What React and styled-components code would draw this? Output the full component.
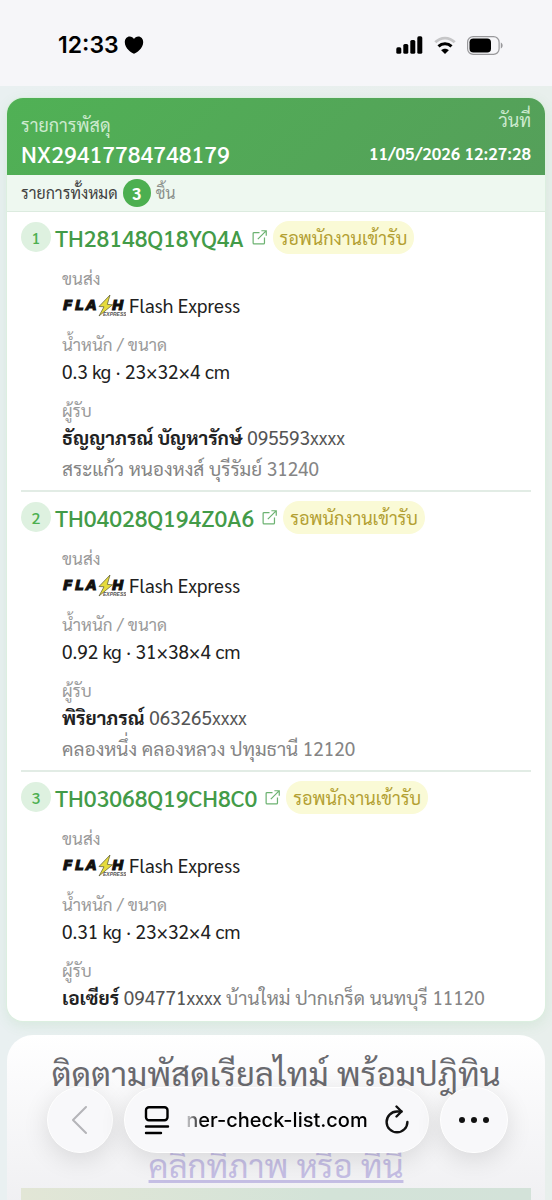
import React from 'react';
import styled, { createGlobalStyle, css } from 'styled-components';

const GlobalStyle = createGlobalStyle`
    * {
        box-sizing: border-box;
    }
    body {
        margin: 0;
        background-color: #e9efee;
        font-family: Sarabun, 'Noto Sans', 'Noto Sans Thai', sans-serif;
        color: #212121;
    }
`;

//#region styled-components
const Screen = styled.div`
    position: relative;
    display: flex;
    flex-direction: column;
    height: 100vh;
    overflow: hidden;
    background: linear-gradient(90deg, #e9f0f1, #e8efec);
`;

const StatusBar = styled.header`
    display: flex;
    flex-shrink: 0;
    justify-content: space-between;
    align-items: center;
    height: 86px;
    padding: 4px 48px 0 58px;
    background-color: #f6f6f9;
    color: #000;
`;

const Clock = styled.div`
    display: flex;
    align-items: center;
    gap: 5px;
    font-family: Inter, sans-serif;
    font-size: 23px;
    font-weight: 600;
`;

const StatusIcons = styled.div`
    display: flex;
    align-items: center;
    gap: 11px;
`;

const Page = styled.main`
    display: flex;
    flex: 1;
    flex-direction: column;
    gap: 14px;
    padding: 12px 7px 0;
`;

const OrderCard = styled.section`
    flex-shrink: 0;
    border-radius: 16px;
    background-color: #fff;
    box-shadow: 0 0 0 1px #dcefe0, 0 4px 14px rgba(76, 175, 80, 0.12);
    overflow: hidden;
`;

const OrderHeader = styled.div`
    display: flex;
    justify-content: space-between;
    height: 77px;
    padding: 8px 14px 0;
    background: linear-gradient(135deg, #50b155, #559f5a);
    color: #fff;
`;

const HeaderColumn = styled.div`
    display: flex;
    flex-direction: column;
    padding-top: ${(props) => (props.$end ? '0' : '5px')};
    gap: ${(props) => (props.$end ? '5px' : '0')};
    align-items: ${(props) => (props.$end ? 'flex-end' : 'flex-start')};
`;

const HeaderLabel = styled.div`
    font-size: 18px;
    line-height: 28px;
    color: #cdeacf;
`;

const OrderNumber = styled.div`
    font-size: 23px;
    font-weight: 500;
    line-height: 28px;
`;

const OrderDate = styled.div`
    font-size: 17px;
    font-weight: 600;
    line-height: 28px;
`;

const TotalRow = styled.div`
    display: flex;
    align-items: center;
    gap: 5px;
    height: 37px;
    padding: 0 14px 1px;
    border-bottom: 1px solid #dcebdf;
    background-color: #eef8f0;
    font-size: 16px;
    color: #424242;
`;

const Muted = styled.span`
    color: #8a8f8b;
`;

const round = css`
    display: flex;
    flex-shrink: 0;
    justify-content: center;
    align-items: center;
    border-radius: 50%;
`;

const TotalBadge = styled.span`
    ${round}
    width: 28px;
    height: 28px;
    background-color: #4caf50;
    color: #fff;
    font-size: 17px;
    font-weight: 700;
`;

const ParcelList = styled.ul`
    margin: 0;
    padding: 0 14px 2px;
    list-style: none;
`;

const ParcelItem = styled.li`
    padding: 8px 0 6px;
    & + & {
        border-top: 2px solid #e2ece5;
    }
`;

const ParcelHead = styled.div`
    display: flex;
    align-items: center;
    height: 34px;
`;

const ParcelIndex = styled.span`
    ${round}
    width: 30px;
    height: 30px;
    margin-right: 4px;
    background-color: #def1e0;
    color: #4caf50;
    font-size: 16px;
    font-weight: 500;
`;

const TrackingLink = styled.a`
    display: flex;
    align-items: center;
    gap: 8px;
    color: #439b48;
    font-size: 23px;
    font-weight: 500;
    line-height: 34px;
    text-decoration: none;
`;

const Status = styled.span`
    margin-left: 6px;
    padding: 0 7px;
    border-radius: 16px;
    background-color: #fafad6;
    color: #b3a032;
    font-size: 18px;
    line-height: 33px;
`;

const Details = styled.dl`
    display: flex;
    flex-direction: column;
    gap: 11px;
    margin: 0;
    padding: 12px 0 0 41px;
`;

const Label = styled.dt`
    font-size: 17px;
    line-height: 24px;
    color: #9a9a9a;
`;

const Value = styled.dd`
    margin: 0;
    font-size: 19px;
    line-height: 31px;

    b {
        font-weight: 700;
    }
`;

const Carrier = styled.span`
    display: flex;
    align-items: center;
    gap: 3px;
`;

const Phone = styled.span`
    color: #555;
`;

const Address = styled.span`
    display: inline-block;
    color: #858585;
`;

const PromoCard = styled.section`
    display: flex;
    flex: 1;
    flex-direction: column;
    gap: 46px;
    padding: 15px 14px 0;
    border-radius: 26px 26px 0 0;
    background: linear-gradient(#fff, #fbfbfc 40px, #ececef);
    text-align: center;
`;

const PromoTitle = styled.h2`
    margin: 0;
    color: #6a6a6f;
    font-size: 33px;
    font-weight: 400;
    line-height: 46px;
    white-space: nowrap;
`;

const PromoLink = styled.a`
    color: #c5bee4;
    font-size: 33px;
    line-height: 46px;
    text-decoration: underline;
`;

const PromoBody = styled.div`
    display: flex;
    flex-direction: column;
    align-items: center;
`;

const PromoBanner = styled.div`
    align-self: stretch;
    height: 60px;
    background: linear-gradient(90deg, #e2e6d6, #d3e3d8 60%, #d3e2d9);
`;

const Toolbar = styled.nav`
    position: absolute;
    right: 0;
    bottom: 47px;
    left: 0;
    display: flex;
    gap: 11px;
    padding: 0 44px 0 47px;
`;

const glass = css`
    display: flex;
    align-items: center;
    height: 66px;
    border: 1px solid #fff;
    border-radius: 33px;
    background-color: #f8f8fa;
    box-shadow: 0 6px 26px rgba(0, 0, 0, 0.12);
`;

const RoundButton = styled.button`
    ${glass}
    flex-shrink: 0;
    justify-content: center;
    width: ${(props) => props.$width || '66px'};
    padding: 0;
    color: #111;
`;

const AddressBar = styled.div`
    ${glass}
    flex: 1;
    justify-content: space-between;
    min-width: 0;
    padding: 0 18px 0 19px;
`;

const IconButton = styled.button`
    display: flex;
    padding: 0;
    border: 0;
    background: none;
    color: #111;
`;

const Url = styled.button`
    padding: 0;
    border: 0;
    background: linear-gradient(90deg, #d5d5d8, #000 16px);
    background-clip: text;
    color: transparent;
    font-family: Inter, sans-serif;
    font-size: 20px;
    font-weight: 500;
    line-height: 28px;
    white-space: nowrap;
`;
//#endregion

const parcels = [
    {
        tracking: 'TH28148Q18YQ4A',
        size: '0.3 kg · 23×32×4 cm',
        name: 'ธัญญาภรณ์ บัญหารักษ์',
        phone: '095593xxxx',
        address: 'สระแก้ว หนองหงส์ บุรีรัมย์ 31240',
    },
    {
        tracking: 'TH04028Q194Z0A6',
        size: '0.92 kg · 31×38×4 cm',
        name: 'พิริยาภรณ์',
        phone: '063265xxxx',
        address: 'คลองหนึ่ง คลองหลวง ปทุมธานี 12120',
    },
    {
        tracking: 'TH03068Q19CH8C0',
        size: '0.31 kg · 23×32×4 cm',
        name: 'เอเซียร์',
        phone: '094771xxxx',
        address: 'บ้านใหม่ ปากเกร็ด นนทบุรี 11120',
    },
];

const HeartIcon = () => (
    <svg width="20" height="18" viewBox="0 0 20 18" aria-hidden="true">
        <path
            d="M10 17.8C7.6 16.8 .8 12.600.8 6.200.8 2.900 3 .6 5.600.6 7.600.6 9.200 1.500 10 3 10.800 1.500 12.400.6 14.400.6 17 .6 19.200 2.900 19.200 6.200c0 6.400-6.800 10.600-9.200 11.600z"
            fill="#000"
        />
    </svg>
);

const SignalIcon = () => (
    <svg width="27" height="18" viewBox="0 0 27 18" aria-hidden="true">
        <rect x="0.300" y="11.300" width="5" height="6.500" rx="1.600" />
        <rect x="7.300" y="8" width="5" height="9.800" rx="1.600" />
        <rect x="14.300" y="4" width="5" height="13.800" rx="1.600" />
        <rect x="21.300" y="0.300" width="5" height="17.500" rx="1.600" />
    </svg>
);

const WifiIcon = () => (
    <svg width="22" height="18" viewBox="0 0 22 18" fill="none" aria-hidden="true">
        <path d="M1.300 6.300C6.700.6 15.300.6 20.700 6.300" stroke="#c6c6c8" strokeWidth="2.800" />
        <path d="M4.500 10.300c3.600-3.500 9.400-3.500 13 0" stroke="#000" strokeWidth="3" />
        <path d="M11 18 7.200 14.200c2-2 5.600-2 7.600 0z" fill="#000" />
    </svg>
);

const BatteryIcon = () => (
    <svg width="37" height="19" viewBox="0 0 37 19" aria-hidden="true">
        <rect x="0.600" y="0.600" width="31.500" height="17.800" rx="5.600" fill="none" stroke="#98989b" strokeWidth="1.200" />
        <rect x="2.500" y="2.500" width="21.500" height="14" rx="3.800" />
        <path d="M33.800 6.500c2.400.8 2.400 5.200 0 6z" fill="#98989b" />
    </svg>
);

const ExternalIcon = () => (
    <svg width="15" height="15" viewBox="0 0 16 16" fill="none" stroke="#6cb271" strokeWidth="1.300" aria-hidden="true">
        <path d="M8 2.700H2.200a1 1 0 0 0-1 1v10.100a1 1 0 0 0 1 1h10.100a1 1 0 0 0 1-1V8" />
        <path d="M10 .8h5.200V6M15 1 6.200 9.800" />
    </svg>
);

const FlashLogo = () => (
    <svg width="64" height="24" viewBox="0 0 64 24" role="img" aria-label="Flash Express">
        <g
            fontFamily="DejaVu Sans, sans-serif"
            fontSize="14"
            fontWeight="700"
            fontStyle="italic"
            fill="#111"
            stroke="#111"
            strokeWidth="1"
        >
            <text x="1" y="16">F</text>
            <text x="13" y="16">L</text>
            <text x="24" y="16">A</text>
            <text x="50" y="16">H</text>
        </g>
        <path d="M48 1 37 12.500l5 .3L37 22 50.500 10.800l-5.200-.4z" fill="#e6dc3c" stroke="#55552f" strokeWidth="0.700" />
        <text
            x="41"
            y="22"
            fontFamily="Liberation Sans, sans-serif"
            fontSize="5"
            fontWeight="700"
            fontStyle="italic"
            fill="#555"
        >
            EXPRESS
        </text>
    </svg>
);

const BackIcon = () => (
    <svg width="16" height="30" viewBox="0 0 16 30" fill="none" aria-hidden="true">
        <path d="M14 2 1 15 14 28" stroke="#b5b5b8" strokeWidth="2" strokeLinecap="round" strokeLinejoin="round" />
    </svg>
);

const ReaderIcon = () => (
    <svg width="26" height="30" viewBox="0 0 26 30" fill="none" stroke="#000" strokeWidth="2.400" strokeLinecap="round" aria-hidden="true">
        <rect x="2" y="2.200" width="21.500" height="13" rx="3" />
        <path d="M2 21.500h22M2 28h15" />
    </svg>
);

const ReloadIcon = () => (
    <svg width="26" height="30" viewBox="0 0 26 30" fill="none" stroke="#111" strokeWidth="2.400" strokeLinecap="round" strokeLinejoin="round" aria-hidden="true">
        <path d="M17.500 6.500H13a10.400 10.400 0 1 0 10.400 10.400" />
        <path d="M12.500 1.500 17.500 6.500l-5 5" />
    </svg>
);

const MoreIcon = () => (
    <svg width="32" height="8" viewBox="0 0 32 8" fill="#111" aria-hidden="true">
        <circle cx="4" cy="4" r="3" />
        <circle cx="16" cy="4" r="3" />
        <circle cx="28" cy="4" r="3" />
    </svg>
);

const Parcel = ({ index, parcel }) => (
    <ParcelItem>
        <ParcelHead>
            <ParcelIndex>{index}</ParcelIndex>
            <TrackingLink href={`#${parcel.tracking}`}>
                {parcel.tracking}
                <ExternalIcon />
            </TrackingLink>
            <Status>รอพนักงานเข้ารับ</Status>
        </ParcelHead>
        <Details>
            <div>
                <Label>ขนส่ง</Label>
                <Value>
                    <Carrier>
                        <FlashLogo />
                        Flash Express
                    </Carrier>
                </Value>
            </div>
            <div>
                <Label>น้ำหนัก / ขนาด</Label>
                <Value>{parcel.size}</Value>
            </div>
            <div>
                <Label>ผู้รับ</Label>
                <Value>
                    <b>{parcel.name}</b> <Phone>{parcel.phone}</Phone>{' '}
                    <Address>{parcel.address}</Address>
                </Value>
            </div>
        </Details>
    </ParcelItem>
);

const App = () => {
    return (
        <Screen>
            <GlobalStyle />
            <StatusBar>
                <Clock>
                    12:33
                    <HeartIcon />
                </Clock>
                <StatusIcons>
                    <SignalIcon />
                    <WifiIcon />
                    <BatteryIcon />
                </StatusIcons>
            </StatusBar>
            <Page>
                <OrderCard>
                    <OrderHeader>
                        <HeaderColumn>
                            <HeaderLabel>รายการพัสดุ</HeaderLabel>
                            <OrderNumber>NX29417784748179</OrderNumber>
                        </HeaderColumn>
                        <HeaderColumn $end>
                            <HeaderLabel>วันที่</HeaderLabel>
                            <OrderDate>11/05/2026 12:27:28</OrderDate>
                        </HeaderColumn>
                    </OrderHeader>
                    <TotalRow>
                        รายการทั้งหมด <TotalBadge>{parcels.length}</TotalBadge>
                        <Muted>ชิ้น</Muted>
                    </TotalRow>
                    <ParcelList>
                        {parcels.map((parcel, i) => (
                            <Parcel key={parcel.tracking} index={i + 1} parcel={parcel} />
                        ))}
                    </ParcelList>
                </OrderCard>
                <PromoCard>
                    <PromoTitle>ติดตามพัสดุเรียลไทม์ พร้อมปฎิทิน</PromoTitle>
                    <PromoBody>
                        <PromoLink href="#calendar">คลิกที่ภาพ หรือ ที่นี่</PromoLink>
                        <PromoBanner />
                    </PromoBody>
                </PromoCard>
            </Page>
            <Toolbar>
                <RoundButton type="button" aria-label="Back">
                    <BackIcon />
                </RoundButton>
                <AddressBar>
                    <IconButton type="button" aria-label="Page menu">
                        <ReaderIcon />
                    </IconButton>
                    <Url type="button">ner-check-list.com</Url>
                    <IconButton type="button" aria-label="Reload">
                        <ReloadIcon />
                    </IconButton>
                </AddressBar>
                <RoundButton type="button" aria-label="More" $width="68px">
                    <MoreIcon />
                </RoundButton>
            </Toolbar>
        </Screen>
    );
};

export default App;
